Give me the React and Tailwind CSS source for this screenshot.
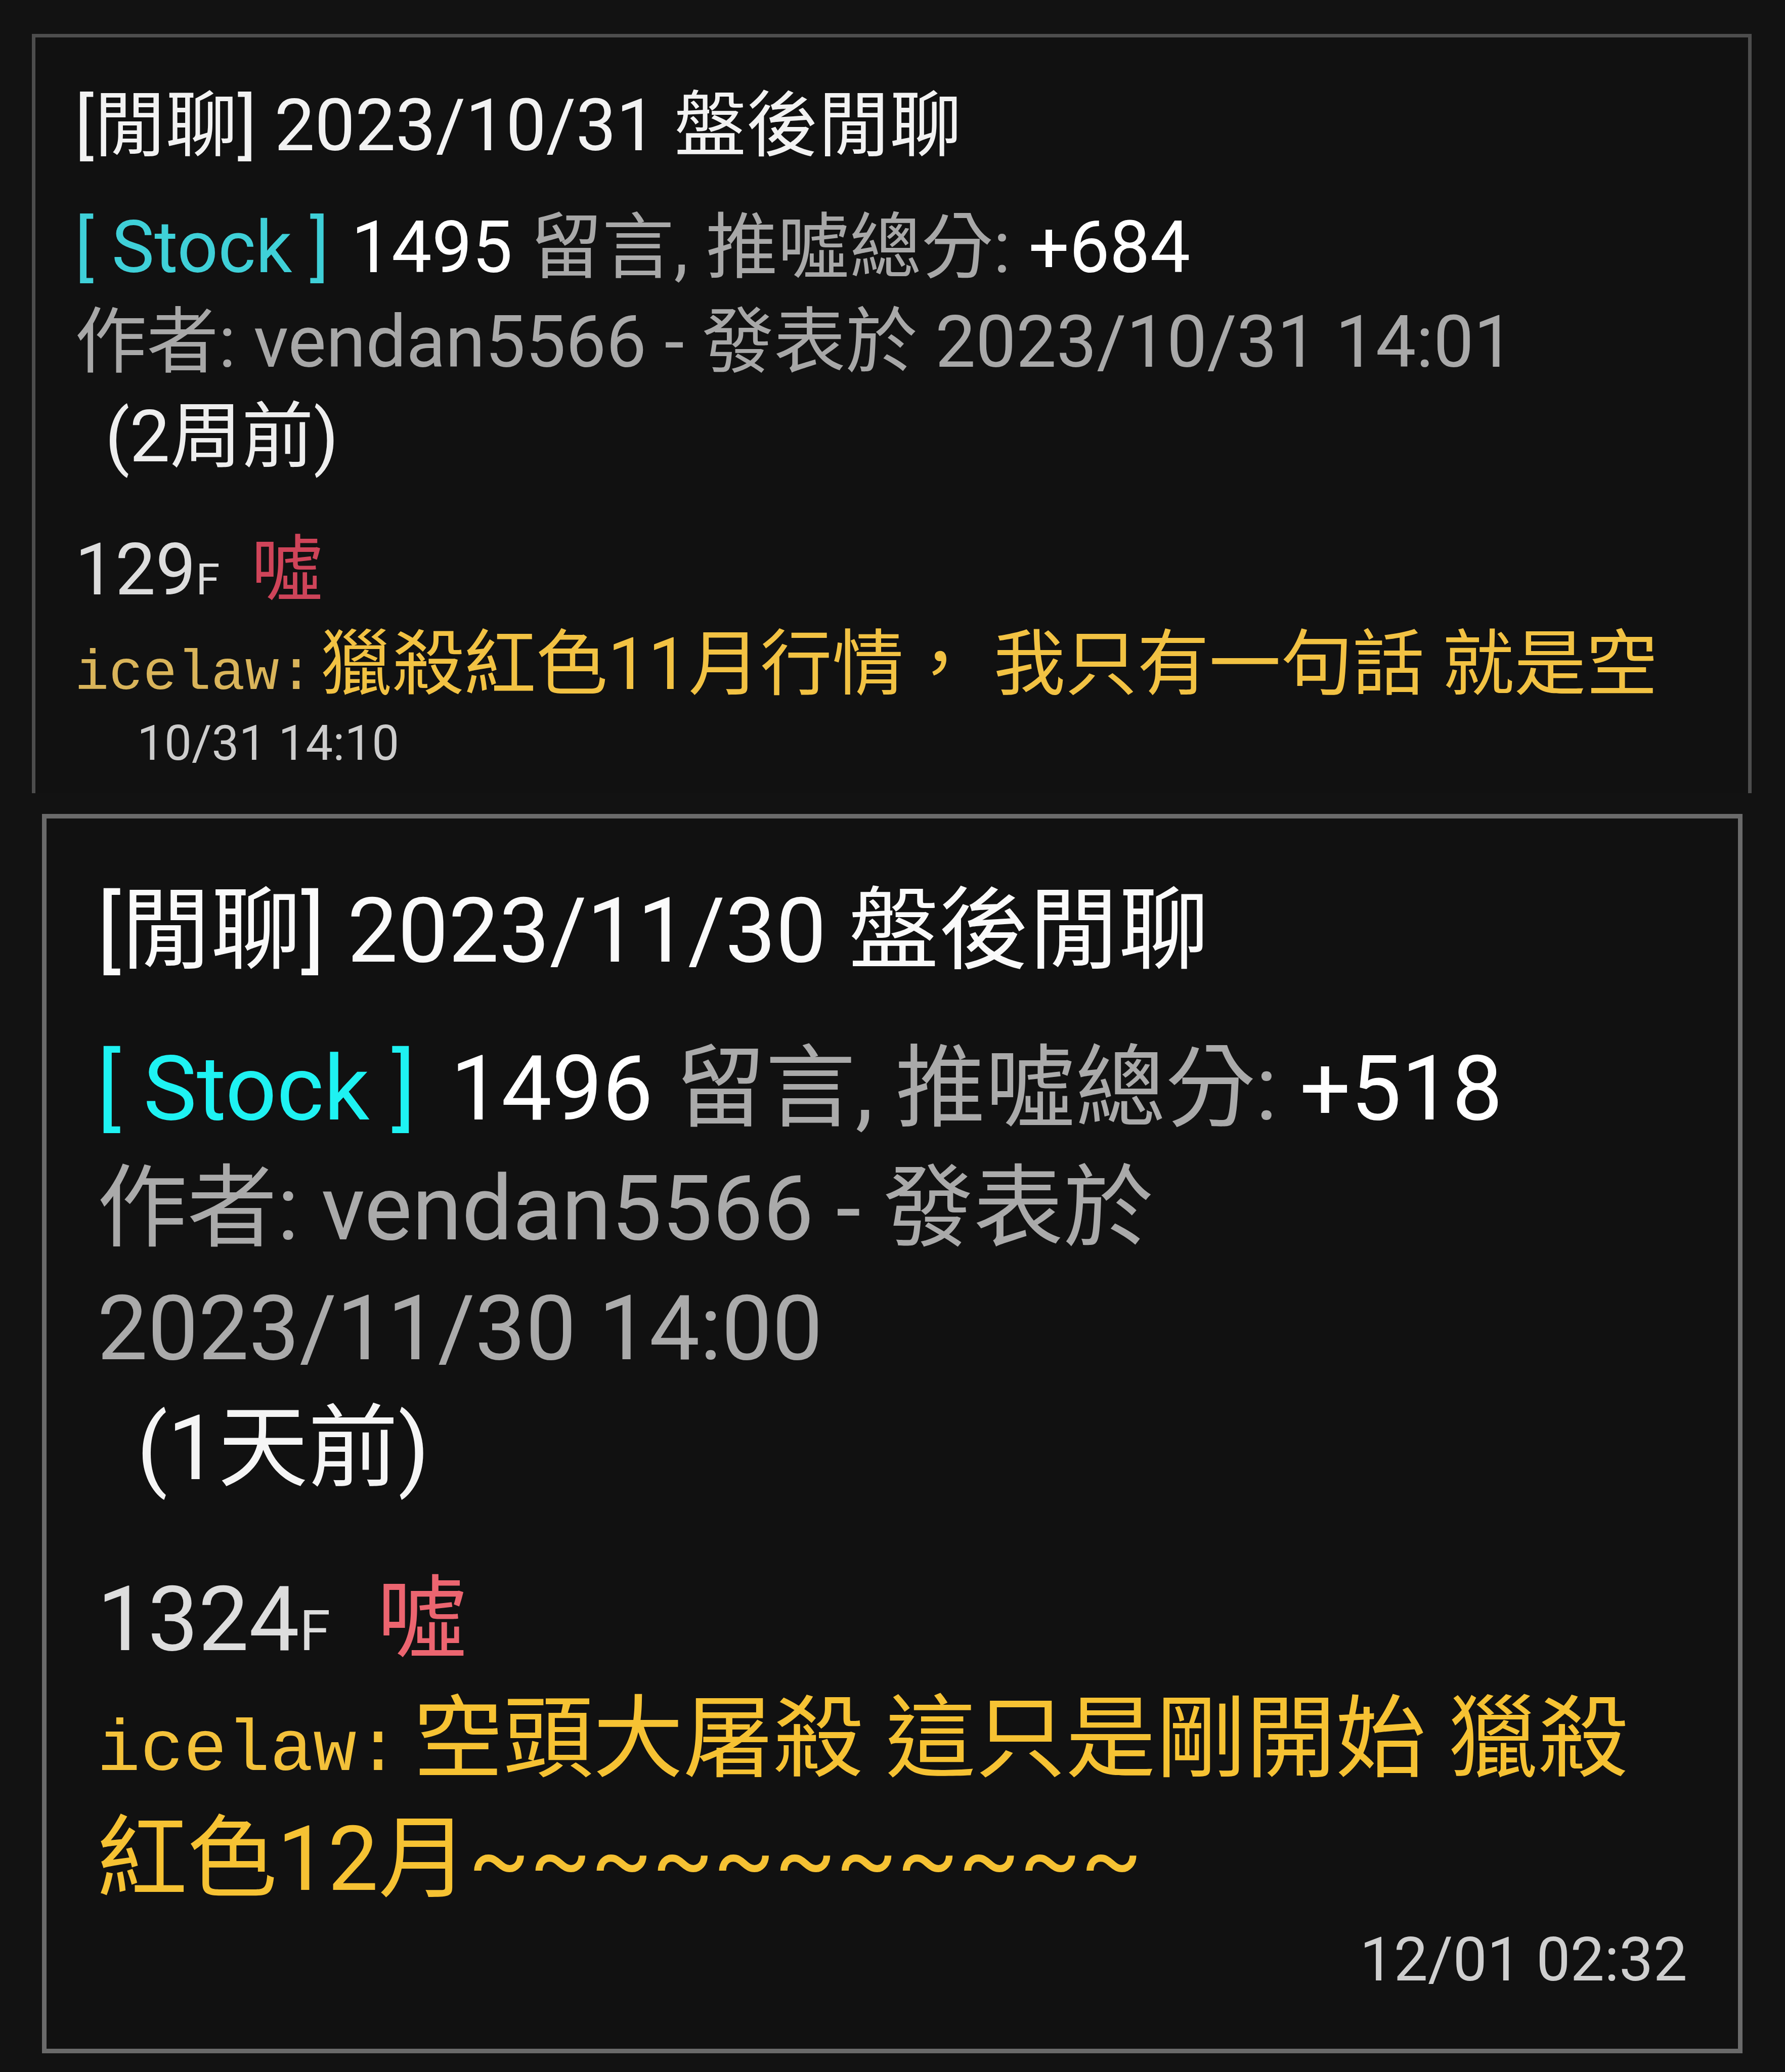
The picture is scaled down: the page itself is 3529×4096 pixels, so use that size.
import React from 'react';

const PostCard1 = () => {
  return (
    <div className="ml-[63px] w-[3400px] border-[7px] border-b-0 border-[#4d4d4d] bg-[#111111] px-[78px] pt-[81px] pb-[36px] text-[142px] leading-[187px]">
      <div className="text-[#f2f2f2]">[閒聊] 2023/10/31 盤後閒聊</div>
      <div className="mt-[54px]">
        <span className="text-[#3fd0d8]">[ Stock ]</span>
        <span className="ml-[0.06em] text-white"> 1495</span>
        <span className="text-[#a8a8a8]"> 留言, 推噓總分: </span>
        <span className="text-white">+684</span>
      </div>
      <div className="text-[#a8a8a8]">
        作者: vendan5566 - 發表於 <span className="whitespace-nowrap">2023/10/31 14:01</span>
      </div>
      <div className="ml-[0.42em] text-[#eeeeee]">(2周前)</div>
      <div className="mt-[76px] text-[#dddddd]">
        129<span className="text-[0.6em] leading-none">F</span>
        <span className="ml-[0.44em] text-[#cf4459]">噓</span>
      </div>
      <div>
        <span className="font-['Liberation_Mono',monospace] text-[0.79em] leading-none text-[#d9b45a]">icelaw:</span>
        <span className="ml-[0.1em] text-[#f2c243]">獵殺紅色11月行情， 我只有一句話 就是空</span>
      </div>
      <div className="pl-[123px] text-[96px] leading-[125px] text-[#cccccc]">10/31 14:10</div>
    </div>
  );
};

const PostCard2 = () => {
  return (
    <div className="mt-[41px] ml-[83px] w-[3362px] border-[9px] border-[#6a6a6a] bg-[#111111] px-[100px] pt-[104px] pb-[96px] text-[178px] leading-[237px]">
      <div className="text-[#fafafa]">[閒聊] 2023/11/30 盤後閒聊</div>
      <div className="mt-[75px]">
        <span className="text-[#1ef2f2]">[ Stock ]</span>
        <span className="ml-[0.14em] text-white"> 1496</span>
        <span className="text-[#aaaaaa]"> 留言, 推噓總分: </span>
        <span className="text-white">+518</span>
      </div>
      <div className="text-[#aaaaaa]">
        作者: vendan5566 - 發表於 <span className="whitespace-nowrap">2023/11/30 14:00</span>
      </div>
      <div className="ml-[0.44em] text-[#f5f5f5]">(1天前)</div>
      <div className="mt-[101px] text-[#dddddd]">
        1324<span className="text-[0.62em] leading-none">F</span>
        <span className="ml-[0.52em] text-[#ec6570]">噓</span>
      </div>
      <div>
        <span className="font-['Liberation_Mono',monospace] text-[0.8em] leading-none text-[#f3c13a]">icelaw:</span>
        <span className="ml-[0.15em] text-[#f6c233]">空頭大屠殺 這只是剛開始 獵殺紅色12月~~~~~~~~~~~</span>
      </div>
      <div className="flex justify-end text-[120px] leading-[160px] text-[#cfcfcf]">12/01 02:32</div>
    </div>
  );
};

export default function App() {
  return (
    <div className="min-h-screen bg-[#121212] pt-[67px] font-['Roboto','Noto_Sans_CJK_TC',sans-serif]">
      <PostCard1 />
      <PostCard2 />
    </div>
  );
}
